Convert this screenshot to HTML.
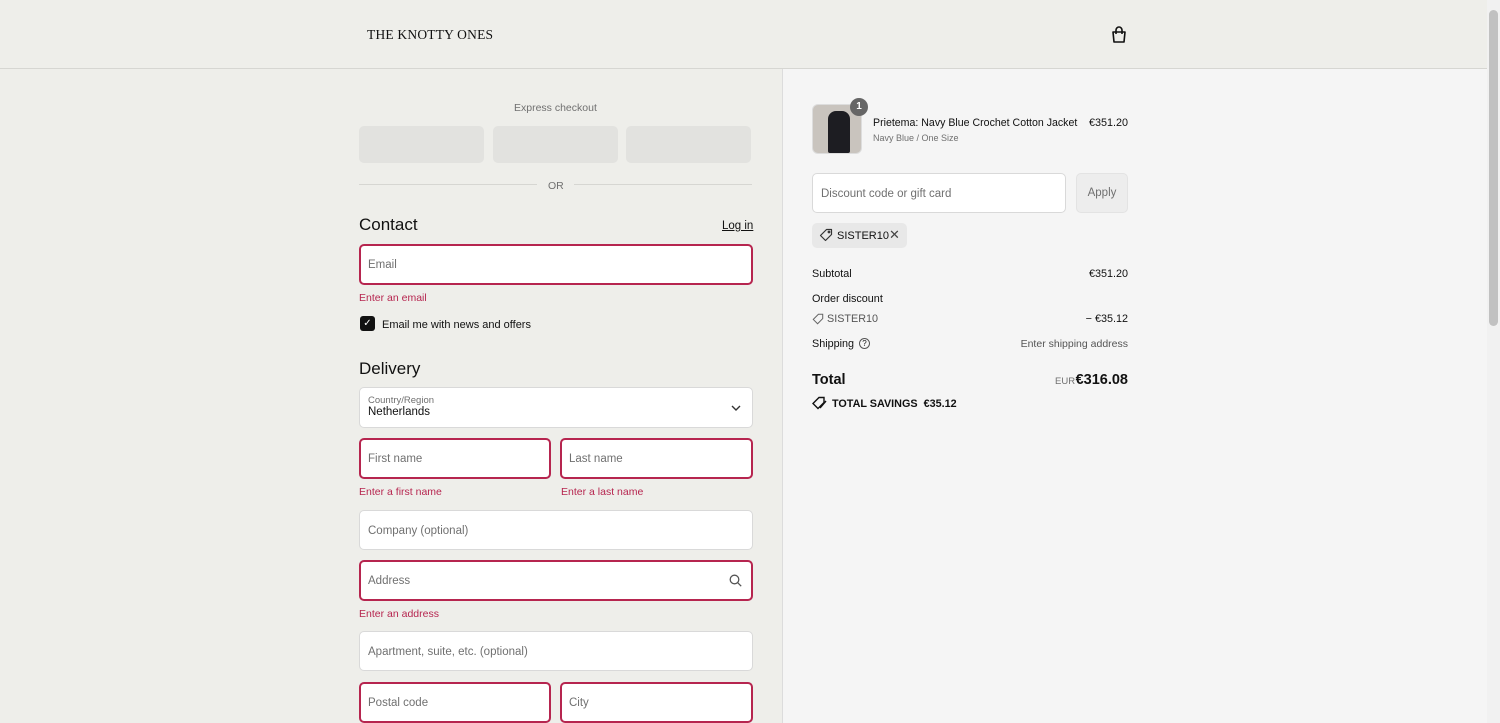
<!DOCTYPE html>
<html><head><meta charset="utf-8"><style>
*{box-sizing:border-box;margin:0;padding:0}
body{width:1500px;height:723px;overflow:hidden;font-family:"Liberation Sans",sans-serif;background:#eeeeea;position:relative;color:#111}
.hdr{position:absolute;left:0;top:0;width:1487px;height:69px;border-bottom:1px solid #d6d6d2;background:#eeeeea}
.logo{position:absolute;left:367px;top:27px;font-family:"Liberation Serif",serif;font-size:13.5px;letter-spacing:0.2px}
.right{position:absolute;left:782px;top:69px;width:705px;height:654px;background:#f5f5f5;border-left:1px solid #dcdcdc}
.sb{position:absolute;left:1487px;top:0;width:13px;height:723px;background:#f1f1f1}
.sb div{position:absolute;left:2px;top:10px;width:9px;height:316px;background:#c1c1c1;border-radius:5px}
.a{position:absolute}
.r{position:absolute;right:372px}
.inp{position:absolute;background:#fff;border:1px solid #d9d9d9;border-radius:5px;font-size:11.5px;color:#707070;padding-left:8px;padding-top:1px;display:flex;align-items:center}
.err{border:2px solid #b6254f;padding-left:7px}
.em{position:absolute;font-size:10.5px;color:#b6254f}
.xb{position:absolute;top:126px;width:125px;height:37px;background:#e2e2df;border-radius:5px}
h2{position:absolute;font-size:17px;font-weight:normal}
.s{font-size:10.8px}
</style></head><body>
<div class="hdr"><div class="logo">THE KNOTTY ONES</div>
<svg class="a" style="left:1111px;top:26px" width="16" height="18" viewBox="0 0 16 18" fill="none" stroke="#111" stroke-width="1.6"><path d="M2 6h12l-1 10H3z" stroke-linejoin="round"/><path d="M5 8V4a3 3 0 0 1 6 0v4"/></svg></div>
<div class="sb"><div></div></div>
<div class="a" style="left:514px;top:102px;color:#707070;font-size:10.5px">Express checkout</div>
<div class="xb" style="left:359px"></div><div class="xb" style="left:493px"></div><div class="xb" style="left:626px"></div>
<div class="a" style="left:359px;top:184px;width:178px;height:1px;background:#d6d6d2"></div>
<div class="a" style="left:574px;top:184px;width:178px;height:1px;background:#d6d6d2"></div>
<div class="a" style="left:548px;top:180px;font-size:10.5px;color:#707070">OR</div>
<h2 style="left:359px;top:215px">Contact</h2>
<div class="a" style="left:722px;top:220px;font-size:11.5px;text-decoration:underline">Log in</div>
<div class="inp err" style="left:359px;top:244px;width:394px;height:41px">Email</div>
<div class="em" style="left:359px;top:292px">Enter an email</div>
<div class="a" style="left:360px;top:316px;width:15px;height:15px;background:#111;border-radius:3px;color:#fff;font-size:10px;text-align:center;line-height:15px">✓</div>
<div class="a" style="left:382px;top:319px;font-size:11px">Email me with news and offers</div>
<h2 style="left:359px;top:359px">Delivery</h2>
<div class="inp" style="left:359px;top:387px;width:394px;height:41px;display:block;padding-top:7px"><div style="font-size:9.5px;color:#707070">Country/Region</div><div style="font-size:11.5px;color:#111">Netherlands</div></div>
<svg class="a" style="left:731px;top:405px" width="10" height="7" viewBox="0 0 10 7" fill="none" stroke="#333" stroke-width="1.4"><path d="M1 1l4 4 4-4"/></svg>
<div class="inp err" style="left:359px;top:438px;width:192px;height:41px">First name</div>
<div class="inp err" style="left:560px;top:438px;width:193px;height:41px">Last name</div>
<div class="em" style="left:359px;top:486px">Enter a first name</div>
<div class="em" style="left:561px;top:486px">Enter a last name</div>
<div class="inp" style="left:359px;top:510px;width:394px;height:40px">Company (optional)</div>
<div class="inp err" style="left:359px;top:560px;width:394px;height:41px">Address</div>
<svg class="a" style="left:729px;top:574px" width="13" height="13" viewBox="0 0 13 13" fill="none" stroke="#555" stroke-width="1.3"><circle cx="5.5" cy="5.5" r="4.3"/><path d="M8.7 8.7l3.5 3.5"/></svg>
<div class="em" style="left:359px;top:608px">Enter an address</div>
<div class="inp" style="left:359px;top:631px;width:394px;height:40px">Apartment, suite, etc. (optional)</div>
<div class="inp err" style="left:359px;top:682px;width:192px;height:41px">Postal code</div>
<div class="inp err" style="left:560px;top:682px;width:193px;height:41px">City</div>
<div class="right"></div>
<div class="a" style="left:812px;top:104px;width:50px;height:50px;border:1px solid #ddd;border-radius:6px;background:#c9c4be;overflow:hidden"><div style="position:absolute;left:15px;top:6px;width:22px;height:42px;background:#1d1d22;border-radius:8px 8px 2px 2px"></div></div>
<div class="a" style="left:850px;top:98px;width:18px;height:18px;border-radius:50%;background:#666;color:#fff;font-size:10px;text-align:center;line-height:18px;font-weight:bold">1</div>
<div class="a" style="left:873px;top:117px;font-size:10.6px">Prietema: Navy Blue Crochet Cotton Jacket</div>
<div class="a" style="left:873px;top:133px;font-size:9px;color:#707070">Navy Blue / One Size</div>
<div class="r s" style="top:117px">€351.20</div>
<div class="inp" style="left:812px;top:173px;width:254px;height:40px">Discount code or gift card</div>
<div class="a" style="left:1076px;top:173px;width:52px;height:40px;background:#ededed;border:1px solid #e3e3e3;border-radius:5px;font-size:11.5px;color:#707070;text-align:center;line-height:39px">Apply</div>
<div class="a" style="left:812px;top:223px;width:95px;height:25px;background:#e8e8e8;border-radius:5px"></div>
<svg class="a" style="left:819px;top:228px" width="14" height="14" viewBox="0 0 14 14" fill="none" stroke="#333" stroke-width="1.2"><path d="M7.5 1.5h5v5l-6 6-5-5z" stroke-linejoin="round"/><circle cx="10" cy="4" r="0.8"/></svg>
<div class="a" style="left:837px;top:230px;font-size:11px">SISTER10</div>
<div class="a" style="left:888px;top:227px;font-size:13px;color:#444;left:889px">✕</div>
<div class="a s" style="left:812px;top:268px">Subtotal</div><div class="r s" style="top:268px">€351.20</div>
<div class="a s" style="left:812px;top:293px">Order discount</div>
<svg class="a" style="left:812px;top:313px" width="12" height="12" viewBox="0 0 14 14" fill="none" stroke="#666" stroke-width="1.2"><path d="M7.5 1.5h5v5l-6 6-5-5z"/></svg>
<div class="a s" style="left:827px;top:313px;color:#555">SISTER10</div><div class="r s" style="top:313px">− €35.12</div>
<div class="a s" style="left:812px;top:338px">Shipping</div>
<div class="a" style="left:859px;top:338px;width:11px;height:11px;border:1px solid #555;border-radius:50%;font-size:8px;text-align:center;line-height:9px">?</div>
<div class="r s" style="top:338px;color:#555;font-size:10.5px">Enter shipping address</div>
<div class="a" style="left:812px;top:372px;font-size:14.5px;font-weight:bold">Total</div>
<div class="a" style="left:1055px;top:376px;font-size:9.5px;color:#707070">EUR</div>
<div class="r" style="top:372px;font-size:14.5px;font-weight:bold">€316.08</div>
<svg class="a" style="left:812px;top:396px" width="15" height="14" viewBox="0 0 15 14" fill="none" stroke="#111" stroke-width="1.4"><path d="M7 1.5h5v5l-6 6-5-5z"/><path d="M14 5l-6 7"/></svg>
<div class="a" style="left:832px;top:398px;font-size:10.8px;font-weight:bold">TOTAL SAVINGS&nbsp;&nbsp;€35.12</div>
</body></html>
